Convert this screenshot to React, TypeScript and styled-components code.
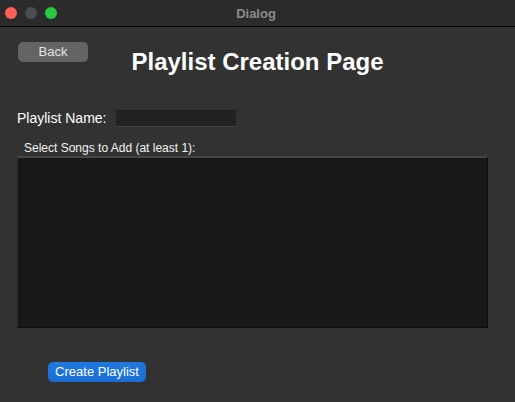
import React from "react";
import styled, { createGlobalStyle } from "styled-components";

const Global = createGlobalStyle`
  html, body { margin: 0; padding: 0; background: #323232; }
  body { font-family: "Liberation Sans", Arial, sans-serif; }
`;

const Window = styled.div`
  width: 515px;
  height: 402px;
  background: #323232;
  display: flex;
  flex-direction: column;
  overflow: hidden;
`;

const TitleBar = styled.div`
  height: 26px;
  background: #2b2b2b;
  border-bottom: 1px solid #000;
  display: grid;
  grid-template-columns: 1fr auto 1fr;
  align-items: center;
`;

const Lights = styled.div`
  display: flex;
  gap: 8px;
  padding-left: 5px;
`;

const Light = styled.span<{ $color: string }>`
  width: 12px;
  height: 12px;
  border-radius: 50%;
  background: ${(p) => p.$color};
`;

const WindowTitle = styled.div`
  font-size: 13px;
  font-weight: bold;
  color: #8c8c8c;
  margin-left: -3px;
`;

const Content = styled.div`
  display: flex;
  flex-direction: column;
  align-items: flex-start;
  padding: 15px 17px 0 17px;
`;

const Header = styled.div`
  width: 100%;
  display: grid;
  grid-template-columns: 1fr auto 1fr;
  align-items: start;
  height: 34px;
`;

const BackButton = styled.button`
  width: 70px;
  height: 20px;
  margin-left: 1px;
  border: none;
  border-radius: 5px;
  background: #646464;
  color: #e4e4e4;
  font-family: "Liberation Sans", Arial, sans-serif;
  font-size: 13px;
  padding: 0;
  line-height: 20px;
`;

const PageTitle = styled.h1`
  margin: 6px 0 0 0;
  font-size: 24px;
  line-height: 28px;
  font-weight: bold;
  color: #ffffff;
`;

const NameRow = styled.div`
  display: flex;
  align-items: center;
  gap: 10px;
  margin-top: 34px;
  height: 17px;
`;

const Label = styled.label`
  font-size: 14px;
  line-height: 17px;
  color: #ffffff;
`;

const NameInput = styled.input`
  box-sizing: border-box;
  width: 120px;
  height: 17px;
  margin: 0;
  padding: 0 3px;
  background: #222222;
  border: none;
  border-top: 1px solid #1c1c1c;
  border-bottom: 1px solid #474747;
  outline: none;
  color: #fff;
  font-family: "Liberation Sans", Arial, sans-serif;
  font-size: 12px;
`;

const SmallLabel = styled.div`
  margin: 14px 0 0 7px;
  font-size: 12px;
  line-height: 14px;
  color: #f2f2f2;
`;

const SongList = styled.div`
  box-sizing: border-box;
  margin-top: 1px;
  width: 471px;
  height: 172px;
  background: #181818;
  border-top: 2px solid #464646;
  border-left: 1px solid #2a2a2a;
  border-right: 1px solid #0e0e0e;
  border-bottom: 1px solid #0e0e0e;
`;

const CreateButton = styled.button`
  margin: 34px 0 0 31px;
  width: 98px;
  height: 20px;
  padding: 0;
  border: none;
  border-radius: 5px;
  background: linear-gradient(#2079e0, #1b6dd4);
  color: #ffffff;
  font-family: "Liberation Sans", Arial, sans-serif;
  font-size: 13px;
  line-height: 20px;
`;

export default function App() {
  return (
    <>
      <Global />
      <Window>
        <TitleBar>
          <Lights>
            <Light $color="#fe5f57" />
            <Light $color="#4d4d4f" />
            <Light $color="#28c840" />
          </Lights>
          <WindowTitle>Dialog</WindowTitle>
          <div />
        </TitleBar>
        <Content>
          <Header>
            <div>
              <BackButton>Back</BackButton>
            </div>
            <PageTitle>Playlist Creation Page</PageTitle>
            <div />
          </Header>
          <NameRow>
            <Label>Playlist Name:</Label>
            <NameInput />
          </NameRow>
          <SmallLabel>Select Songs to Add (at least 1):</SmallLabel>
          <SongList />
          <CreateButton>Create Playlist</CreateButton>
        </Content>
      </Window>
    </>
  );
}
